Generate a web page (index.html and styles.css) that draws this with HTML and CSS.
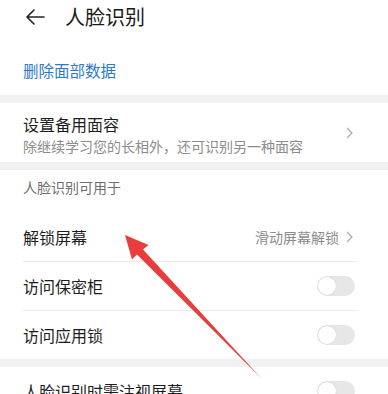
FILE: index.html
```html
<!DOCTYPE html>
<html lang="zh">
<head>
<meta charset="utf-8">
<link rel="stylesheet" href="styles.css">
</head>
<body>
<div class="page">
  <header class="header">
    <svg class="back" width="20" height="16" viewBox="0 0 20 16"><path d="M19 8H2M9 1L2 8l7 7" fill="none" stroke="#222" stroke-width="1.6" stroke-linecap="round" stroke-linejoin="round"/></svg>
    <span class="title">人脸识别</span>
  </header>
  <div class="delete">删除面部数据</div>
  <div class="band"></div>
  <div class="backup">
    <div class="backup-text">
      <div class="main">设置备用面容</div>
      <div class="sub">除继续学习您的长相外，还可识别另一种面容</div>
    </div>
    <svg class="chev" width="7" height="12" viewBox="0 0 7 12"><path d="M1 1l5 5-5 5" fill="none" stroke="#aaa" stroke-width="1.2"/></svg>
  </div>
  <div class="band"></div>
  <div class="section-title">人脸识别可用于</div>
  <div class="list">
    <div class="row">
      <span class="main">解锁屏幕</span>
      <span class="right"><span class="value">滑动屏幕解锁</span><svg class="chev" width="7" height="12" viewBox="0 0 7 12"><path d="M1 1l5 5-5 5" fill="none" stroke="#aaa" stroke-width="1.2"/></svg></span>
    </div>
    <div class="row">
      <span class="main">访问保密柜</span>
      <span class="toggle"><span class="knob"></span></span>
    </div>
    <div class="row last">
      <span class="main">访问应用锁</span>
      <span class="toggle"><span class="knob"></span></span>
    </div>
  </div>
  <div class="band"></div>
  <div class="list">
    <div class="row last">
      <span class="main">人脸识别时需注视屏幕</span>
      <span class="toggle"><span class="knob"></span></span>
    </div>
  </div>
  <svg class="arrow" width="388" height="394" viewBox="0 0 388 394"><polygon points="125,235 148.5,245 143,249.5 261,378 137,254.5 132,259.5" fill="#e93c3c"/></svg>
</div>
</body>
</html>
```
FILE: styles.css
```css
* { box-sizing: border-box; }
html, body { margin: 0; padding: 0; background: #fff; }
body {
  font-family: "Noto Sans CJK SC", "Noto Sans", sans-serif;
  color: #1d1d1d;
  width: 388px;
  height: 394px;
  overflow: hidden;
}
.page { position: relative; width: 388px; height: 394px; overflow: hidden; }
.header {
  height: 34px;
  display: flex;
  align-items: center;
  padding: 0 0 0 25px;
  gap: 20px;
}
.back { flex: none; }
.title { font-size: 20px; line-height: 24px; color: #1a1a1a; }
.delete {
  padding: 26px 23px 15px;
  font-size: 15.5px;
  line-height: 20px;
  color: #2b7ad0;
}
.band { height: 8px; background: #f1f1f1; }
.backup {
  display: flex;
  align-items: center;
  justify-content: space-between;
  padding: 11px 35px 7px 23px;
}
.backup .main { font-size: 16px; line-height: 20px; }
.backup .sub { margin-top: 3px; font-size: 14px; line-height: 18px; color: #8c8c8c; }
.chev { flex: none; display: block; }
.backup .chev { margin-top: -4px; }
.section-title {
  padding: 7px 23px 16px;
  font-size: 14px;
  line-height: 20px;
  color: #6f6f6f;
}
.list { margin: 0 30px 0 23px; }
.row {
  height: 49px;
  display: flex;
  align-items: center;
  justify-content: space-between;
  border-bottom: 1px solid #ececec;
}
.row.last { border-bottom: none; height: 48px; }
.row .main { font-size: 16px; line-height: 20px; }
.right { display: flex; align-items: center; gap: 7px; margin-right: 5px; }
.value { font-size: 14px; color: #8c8c8c; }
.toggle {
  position: relative;
  width: 38px;
  height: 20px;
  border-radius: 10px;
  background: #e6e6e6;
  margin-right: 3px;
}
.knob {
  position: absolute;
  left: 1px;
  top: 1px;
  width: 18px;
  height: 18px;
  border-radius: 50%;
  background: #fff;
  box-shadow: 0 0 1px rgba(0,0,0,0.2);
}
.arrow { position: absolute; left: 0; top: 0; pointer-events: none; }
```
